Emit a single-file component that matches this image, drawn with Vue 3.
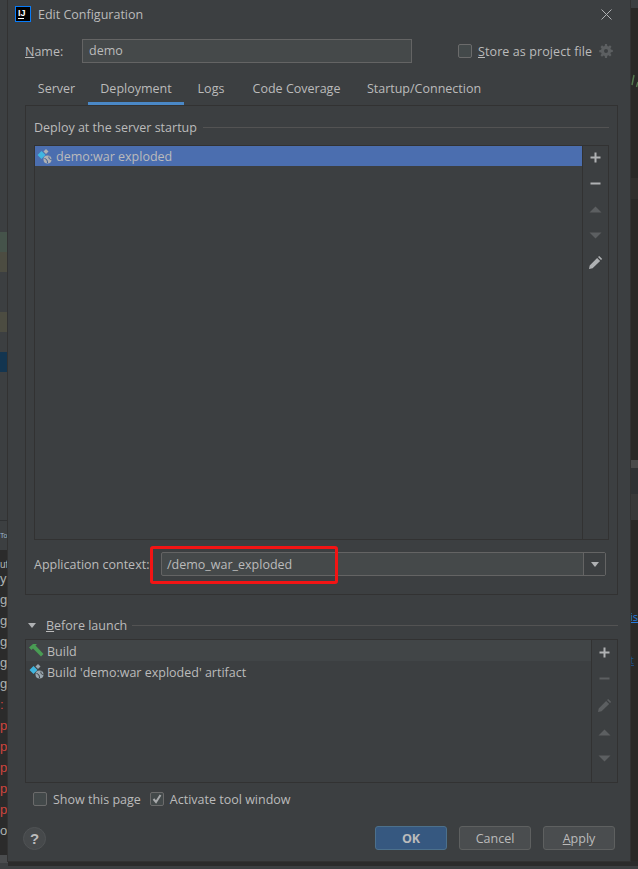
<script setup>
const tabs = [
  { label: 'Server', width: 63 },
  { label: 'Deployment', width: 96, active: true },
  { label: 'Logs', width: 54 },
  { label: 'Code Coverage', width: 117 },
  { label: 'Startup/Connection', width: 138 },
]
const beforeRows = [
  { label: 'Build', icon: 'hammer' },
  { label: "Build 'demo:war exploded' artifact", icon: 'artifact' },
]
const consoleLines = [
  { text: 'To', top: 528, size: 7, color: '#9fb6cc' },
  { text: 'ut', top: 557, size: 10, color: '#adb3b3' },
  { text: 'y', top: 571, size: 13, color: '#adb3b3' },
  { text: 'g', top: 592, size: 13, color: '#adb3b3' },
  { text: 'g', top: 613, size: 13, color: '#adb3b3' },
  { text: 'g', top: 634, size: 13, color: '#adb3b3' },
  { text: 'g', top: 655, size: 13, color: '#adb3b3' },
  { text: 'g', top: 676, size: 13, color: '#adb3b3' },
  { text: ':', top: 697, size: 13, color: '#d0453e' },
  { text: 'p', top: 718, size: 13, color: '#d0453e' },
  { text: 'p', top: 739, size: 13, color: '#d0453e' },
  { text: 'p', top: 760, size: 13, color: '#d0453e' },
  { text: 'p', top: 781, size: 13, color: '#d0453e' },
  { text: 'p', top: 802, size: 13, color: '#d0453e' },
  { text: 'o', top: 823, size: 13, color: '#adb3b3' },
]
</script>

<template>
  <div class="screen">
    <div class="backdrop">
      <i class="patch green"></i>
      <i class="patch olive"></i>
      <i class="patch olive2"></i>
      <i class="patch blue"></i>
      <i class="left-line"></i>
      <i class="console"></i>
      <i class="console-end"></i>
      <span
        v-for="(line, i) in consoleLines"
        :key="i"
        class="console-text"
        :style="{ top: line.top + 'px', fontSize: line.size + 'px', color: line.color }"
      >{{ line.text }}</span>
      <i class="right-strip"></i>
      <i class="right-band band-a"></i>
      <i class="right-band band-b"></i>
      <i class="right-band band-c"></i>
      <i class="right-band band-d"></i>
      <svg class="code-marks" width="8" height="16" viewBox="0 0 8 16">
        <path d="M4 1L2 11M8 8L6.500 13" stroke="#55794f" stroke-width="1.500" fill="none" />
      </svg>
      <span class="link link-a">is</span>
      <span class="link link-b">t</span>
      <i class="bottom-edge"></i>
    </div>

    <div class="dialog">
      <header class="titlebar">
        <svg class="app-icon" width="16" height="16" viewBox="0 0 16 16">
          <rect x="0.500" y="0.500" width="15" height="15" fill="#000" stroke="#087cfa" />
          <text x="3" y="9.500" class="ij">IJ</text>
          <rect x="3" y="12" width="6" height="1" fill="#fff" />
        </svg>
        <span class="title">Edit Configuration</span>
        <svg class="close" width="11" height="11" viewBox="0 0 11 11">
          <path d="M.5.5l10 10M10.500.5l-10 10" stroke="#afb1b3" fill="none" />
        </svg>
      </header>

      <div class="name-row">
        <label class="name-label"><u>N</u>ame:</label>
        <div class="field name-field">demo</div>
        <span class="check-box store-box"></span>
        <span class="store-label"><u>S</u>tore as project file</span>
        <svg class="gear" width="14" height="14" viewBox="0 0 14 14">
          <path fill="#5c5f61" fill-rule="evenodd" d="M6 0h2l.3 1.900 1.200.5L11 1.300l1.500 1.400-1.100 1.600.5 1.200 1.900.4v2l-1.900.3-.5 1.200 1.100 1.600-1.500 1.400-1.500-1.100-1.200.5L8 14H6l-.3-1.900-1.200-.5L3 12.700l-1.500-1.400 1.100-1.600-.5-1.200L.2 8.200v-2l1.900-.4.5-1.200-1.100-1.600L3 1.300l1.500 1.100 1.200-.5zM7 5a2 2 0 1 0 0 4 2 2 0 0 0 0-4z" />
        </svg>
      </div>

      <nav class="tabs">
        <span
          v-for="tab in tabs"
          :key="tab.label"
          class="tab"
          :class="{ active: tab.active }"
          :style="{ width: tab.width + 'px' }"
        >{{ tab.label }}</span>
      </nav>

      <section class="panel">
        <div class="group-title">
          <span>Deploy at the server startup</span>
          <i class="rule"></i>
        </div>
        <div class="list-box deploy-list">
          <div class="list-body">
            <div class="deploy-row">
              <svg class="row-icon" width="17" height="17" viewBox="0 0 17 17">
                <path d="M5.500 3l4 4-4 4-4-4z" fill="#40b6e0" />
                <path d="M10 1l2.500 2.500L10 6 7.500 3.500z" fill="#afb1b3" />
                <circle cx="11.500" cy="11.500" r="4" fill="#afb1b3" />
                <path d="M8.500 10.500c2 .5 3 1.500 3 4.500M13 8.500c-.5 2 .5 3 2.500 3" stroke="#3c5c94" fill="none" />
              </svg>
              <span>demo:war exploded</span>
            </div>
          </div>
          <div class="side-tools">
            <svg width="13" height="13" viewBox="0 0 13 13"><path d="M5.500 1.500h2v4h4v2h-4v4h-2v-4h-4v-2h4z" fill="#afb1b3" /></svg>
            <svg width="13" height="13" viewBox="0 0 13 13"><rect x="1.500" y="5.500" width="10" height="2" fill="#afb1b3" /></svg>
            <svg width="13" height="13" viewBox="0 0 13 13"><path d="M6.500 3.500l6 6H.5z" fill="#5c5f61" /></svg>
            <svg width="13" height="13" viewBox="0 0 13 13"><path d="M.5 3.500h12l-6 6z" fill="#5c5f61" /></svg>
            <svg width="15" height="15" viewBox="0 0 15 15"><path d="M1 14l.7-3.600 7.400-7.500 3 3-7.500 7.400zM10 2l1.200-1.100 3 3L13 5z" fill="#afb1b3" /></svg>
          </div>
        </div>
        <div class="context-row">
          <label>Application context:</label>
          <div class="combo">
            <span class="combo-text">/demo_war_exploded</span>
            <span class="combo-arrow"><i class="arrow-down"></i></span>
          </div>
          <i class="highlight"></i>
        </div>
      </section>

      <div class="before-title">
        <i class="arrow-down before-arrow"></i>
        <span><u>B</u>efore launch</span>
        <i class="rule"></i>
      </div>

      <div class="list-box before-list">
        <div class="list-body">
          <div
            v-for="row in beforeRows"
            :key="row.label"
            class="before-row"
            :class="{ first: row.icon === 'hammer' }"
          >
            <svg v-if="row.icon === 'hammer'" class="row-icon" width="17" height="17" viewBox="0 0 17 17">
              <path d="M1 5.500L5 2h4L7.500 3.500 15.500 12 13 14.500 5 6.500 3.500 8z" fill="#499c54" />
            </svg>
            <svg v-else class="row-icon" width="17" height="17" viewBox="0 0 17 17">
              <path d="M5.500 3l4 4-4 4-4-4z" fill="#40b6e0" />
              <path d="M10 1l2.500 2.500L10 6 7.500 3.500z" fill="#9aa7b0" />
              <circle cx="11.500" cy="11.500" r="4" fill="#9aa7b0" />
              <path d="M8.500 10.500c2 .5 3 1.500 3 4.500M13 8.500c-.5 2 .5 3 2.500 3" stroke="#3c3f41" fill="none" />
            </svg>
            <span class="before-text">{{ row.label }}</span>
          </div>
        </div>
        <div class="side-tools before-tools">
          <svg width="13" height="13" viewBox="0 0 13 13"><path d="M5.500 1.500h2v4h4v2h-4v4h-2v-4h-4v-2h4z" fill="#afb1b3" /></svg>
          <svg width="13" height="13" viewBox="0 0 13 13"><rect x="1.500" y="5.500" width="10" height="2" fill="#5c5f61" /></svg>
          <svg width="15" height="15" viewBox="0 0 15 15"><path d="M1 14l.7-3.600 7.400-7.500 3 3-7.500 7.400zM10 2l1.200-1.100 3 3L13 5z" fill="#5c5f61" /></svg>
          <svg width="13" height="13" viewBox="0 0 13 13"><path d="M6.500 3.500l6 6H.5z" fill="#5c5f61" /></svg>
          <svg width="13" height="13" viewBox="0 0 13 13"><path d="M.5 3.500h12l-6 6z" fill="#5c5f61" /></svg>
        </div>
      </div>

      <div class="options-row">
        <span class="check-box"></span>
        <span class="option-label">Show this page</span>
        <span class="check-box checked">
          <svg width="12" height="12" viewBox="0 0 12 12"><path d="M2.500 6l2.500 3 4.500-7" stroke="#a7a9ab" stroke-width="2" fill="none" /></svg>
        </span>
        <span class="option-label">Activate tool window</span>
      </div>

      <footer class="footer">
        <span class="help">?</span>
        <div class="buttons">
          <button class="btn primary">OK</button>
          <button class="btn">Cancel</button>
          <button class="btn"><u>A</u>pply</button>
        </div>
      </footer>
    </div>
  </div>
</template>

<style>
html, body {
  margin: 0;
  background: #3c3f41;
}
</style>

<style scoped>
.screen {
  position: relative;
  width: 638px;
  height: 869px;
  overflow: hidden;
  font-family: "Open Sans", "Noto Sans", sans-serif;
  font-size: 12.5px;
  color: #bbbbbb;
}

/* the IDE window behind the dialog */
.backdrop {
  position: absolute;
  inset: 0;
  background: #3c3f41;
}
.backdrop i {
  position: absolute;
  display: block;
}
.patch {
  left: 0;
  width: 8px;
}
.green { top: 232px; height: 20px; background: #45534a; }
.olive { top: 252px; height: 20px; background: #4c4c41; }
.olive2 { top: 312px; height: 20px; background: #4c4c41; }
.blue { top: 352px; height: 20px; background: #133550; }
.left-line {
  left: 0;
  top: 520px;
  width: 8px;
  height: 1px;
  background: #2f3133;
}
.console {
  left: 0;
  top: 550px;
  width: 8px;
  height: 305px;
  background: #2b2b2b;
}
.console-end {
  left: 0;
  top: 855px;
  width: 8px;
  height: 8px;
  background: #4a4c4e;
}
.console-text {
  position: absolute;
  left: 0;
  font-family: "Liberation Sans", sans-serif;
  line-height: 16px;
  white-space: nowrap;
}
.right-strip {
  left: 630px;
  top: 8px;
  width: 8px;
  height: 854px;
  background: #2a2927;
}
.right-band {
  left: 630px;
  width: 8px;
}
.band-a { top: 178px; height: 21px; background: #312f2d; }
.band-b { top: 460px; height: 8px; background: #4a4a4a; }
.band-c { top: 468px; height: 26px; background: #303234; }
.band-d { top: 494px; height: 26px; background: #393939; }
.code-marks {
  position: absolute;
  left: 630px;
  top: 74px;
}
.link {
  position: absolute;
  left: 630px;
  color: #287bde;
  font-size: 11px;
  text-decoration: underline;
}
.link-a { top: 609px; }
.link-b { top: 652px; color: #1f4e85; }
.bottom-edge {
  left: 8px;
  top: 861px;
  width: 630px;
  height: 5px;
  background: #2b2b2b;
}

.dialog {
  position: relative;
  margin-left: 8px;
  width: 622px;
  height: 861px;
  box-sizing: border-box;
  padding: 0 12px 0 17px;
  display: flex;
  flex-direction: column;
  background: #3c3f41;
  box-shadow: 0 0 0 1px #323232;
}

.titlebar {
  height: 28px;
  margin: 0 -12px 0 -10px;
  padding: 0 18px 0 0;
  display: flex;
  align-items: center;
  gap: 7px;
}
.app-icon {
  flex: none;
}
.ij {
  font: bold 9px "Liberation Sans", sans-serif;
  fill: #fff;
}
.title {
  flex: 1;
}
.name-row {
  height: 24px;
  margin-top: 11px;
  display: flex;
  align-items: center;
}
.name-label {
  width: 57px;
}
.field {
  box-sizing: border-box;
  height: 24px;
  line-height: 22px;
  padding: 0 6px;
  border: 1px solid #646464;
  background: #45494a;
}
.name-field {
  width: 330px;
  margin-right: 46px;
}
.check-box {
  box-sizing: border-box;
  flex: none;
  width: 14px;
  height: 14px;
  border: 1px solid #6b6b6b;
  border-radius: 2px;
  background: #43494a;
  display: flex;
  align-items: center;
  justify-content: center;
}
.store-label {
  margin-left: 6px;
  width: 121px;
  white-space: nowrap;
  letter-spacing: 0.1px;
}
.gear {
  flex: none;
}

.tabs {
  height: 28px;
  margin-top: 14px;
  display: flex;
}
.tab {
  box-sizing: border-box;
  line-height: 24px;
  text-align: center;
  white-space: nowrap;
}
.tab.active {
  border-bottom: 3px solid #4a88c7;
}

.panel {
  box-sizing: border-box;
  height: 490px;
  border: 1px solid #323232;
  padding: 0 8px;
  display: flex;
  flex-direction: column;
}
.group-title {
  height: 20px;
  margin-top: 11px;
  display: flex;
  align-items: center;
  gap: 6px;
}
.rule {
  flex: 1;
  height: 1px;
  background: #535353;
}
.list-box {
  display: flex;
  border: 1px solid #323232;
  box-sizing: border-box;
}
.deploy-list {
  height: 395px;
  margin-top: 8px;
}
.list-body {
  flex: 1;
  min-width: 0;
}
.deploy-row {
  height: 20px;
  display: flex;
  align-items: center;
  gap: 3px;
  padding-left: 1px;
  background: #4b6eaf;
}
.row-icon {
  flex: none;
}
.side-tools {
  box-sizing: border-box;
  width: 26px;
  flex: none;
  border-left: 1px solid #323232;
  display: flex;
  flex-direction: column;
  align-items: center;
  gap: 13px;
  padding-top: 5px;
}
.context-row {
  position: relative;
  height: 24px;
  margin-top: 12px;
  display: flex;
  align-items: center;
}
.context-row label {
  width: 127px;
}
.combo {
  box-sizing: border-box;
  width: 445px;
  height: 24px;
  border: 1px solid #646464;
  border-radius: 2px;
  background: #45494a;
  display: flex;
  align-items: center;
}
.combo-text {
  flex: 1;
  padding-left: 5px;
}
.combo-arrow {
  box-sizing: border-box;
  width: 22px;
  height: 100%;
  border-left: 1px solid #646464;
  background: #3c3f41;
  display: flex;
  align-items: center;
  justify-content: center;
}
.arrow-down {
  display: block;
  width: 0;
  height: 0;
  border-left: 4.500px solid transparent;
  border-right: 4.500px solid transparent;
  border-top: 5px solid #afb1b3;
}
.highlight {
  position: absolute;
  left: 116px;
  top: -6px;
  width: 188px;
  height: 38px;
  box-sizing: border-box;
  border: 3px solid #f31414;
  border-radius: 3px;
}

.before-title {
  height: 20px;
  margin-top: 20px;
  display: flex;
  align-items: center;
  gap: 5px;
}
.before-arrow {
  margin: 0 5px 0 3px;
}
.before-list {
  height: 144px;
  margin-top: 4px;
}
.before-row {
  height: 21px;
  display: flex;
  align-items: center;
  gap: 2px;
  padding-left: 2px;
}
.before-row.first {
  background: #414547;
}
.before-text {
  padding-top: 2px;
}
.before-tools {
  padding-top: 6px;
}

.options-row {
  height: 16px;
  margin: 8px 0 0 8px;
  display: flex;
  align-items: center;
}
.option-label {
  margin-left: 6px;
  margin-right: 9px;
  white-space: nowrap;
}

.footer {
  margin-top: auto;
  margin-bottom: 11px;
  margin-left: -2px;
  display: flex;
  align-items: center;
  justify-content: space-between;
}
.help {
  width: 23px;
  height: 23px;
  border-radius: 50%;
  border: 1px solid #505355;
  box-sizing: border-box;
  background: #46494b;
  font: bold 15px/21px "Liberation Sans", sans-serif;
  text-align: center;
}
.buttons {
  display: flex;
  gap: 12px;
  margin-right: 3px;
}
.btn {
  box-sizing: border-box;
  width: 72px;
  height: 24px;
  padding: 0;
  border: 1px solid #5e6060;
  border-radius: 3px;
  background: #4a4d4f;
  color: #bbbbbb;
  font: inherit;
}
.btn.primary {
  background: #365880;
  border-color: #4c708c;
  font-weight: 700;
}
</style>
